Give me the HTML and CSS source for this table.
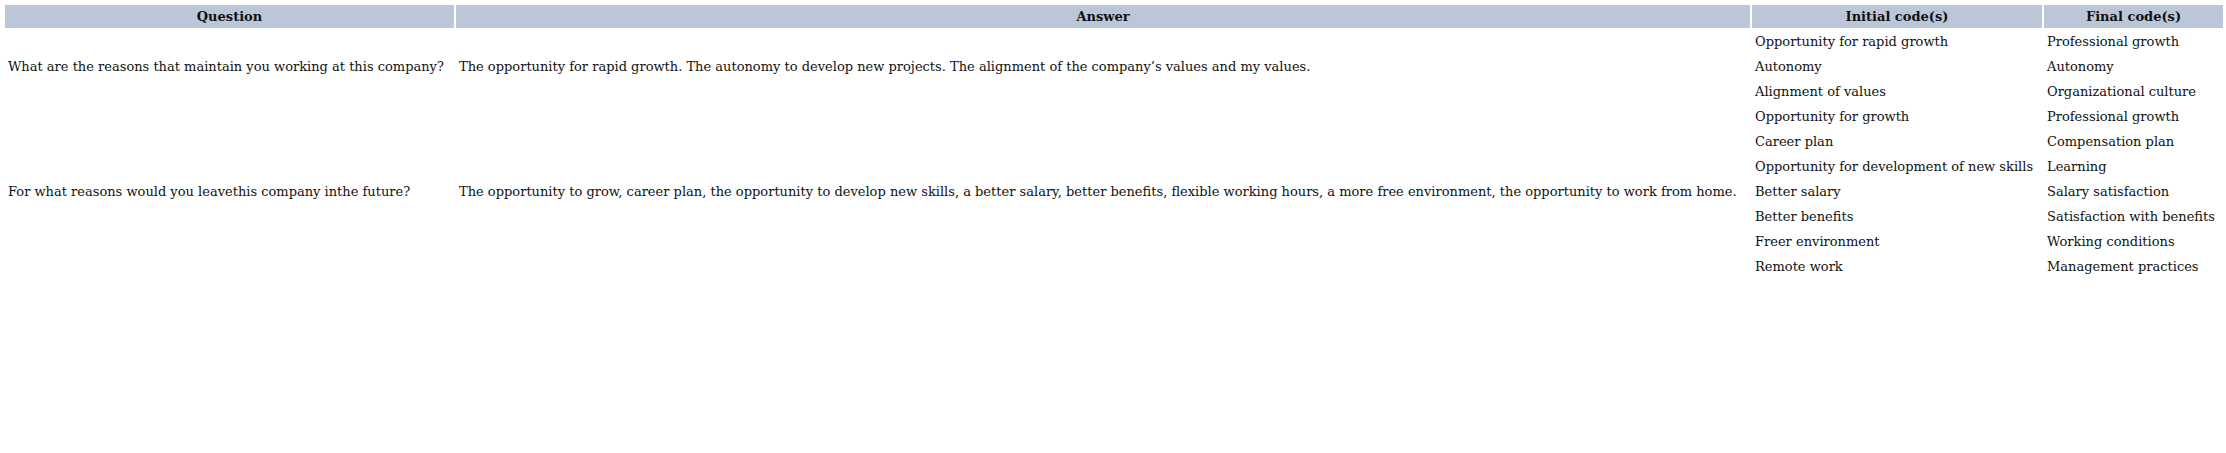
FILE: index.html
```html
<!DOCTYPE html>
<html>
<head>
<meta charset="utf-8">
<link rel="stylesheet" href="styles.css">
</head>
<body>
<table class="codes">
  <colgroup>
    <col class="c-q">
    <col class="c-a">
    <col class="c-i">
    <col class="c-f">
  </colgroup>
  <thead>
    <tr><th>Question</th><th>Answer</th><th>Initial code(s)</th><th>Final code(s)</th></tr>
  </thead>
  <tbody>
    <tr>
      <td rowspan="3">What are the reasons that maintain you working at this company?</td>
      <td rowspan="3">The opportunity for rapid growth. The autonomy to develop new projects. The alignment of the company’s values and my values.</td>
      <td>Opportunity for rapid growth</td><td>Professional growth</td>
    </tr>
    <tr><td>Autonomy</td><td>Autonomy</td></tr>
    <tr><td>Alignment of values</td><td>Organizational culture</td></tr>
    <tr>
      <td rowspan="7">For what reasons would you leavethis company inthe future?</td>
      <td rowspan="7">The opportunity to grow, career plan, the opportunity to develop new skills, a better salary, better benefits, flexible working hours, a more free environment, the opportunity to work from home.</td>
      <td>Opportunity for growth</td><td>Professional growth</td>
    </tr>
    <tr><td>Career plan</td><td>Compensation plan</td></tr>
    <tr><td>Opportunity for development of new skills</td><td>Learning</td></tr>
    <tr><td>Better salary</td><td>Salary satisfaction</td></tr>
    <tr><td>Better benefits</td><td>Satisfaction with benefits</td></tr>
    <tr><td>Freer environment</td><td>Working conditions</td></tr>
    <tr><td>Remote work</td><td>Management practices</td></tr>
  </tbody>
</table>
</body>
</html>
```

FILE: styles.css
```css
html, body {
  background: #ffffff;
}
body {
  margin: 3px;
  font-family: "DejaVu Serif", "Liberation Serif", serif;
  font-size: 13px;
  color: #111111;
}
.codes {
  width: 2220px;
  table-layout: fixed;
  border-collapse: separate;
  border-spacing: 2px;
}
.c-q { width: 449px; }
.c-a { width: 1294px; }
.c-i { width: 290px; }
.c-f { width: 179px; }
.codes th {
  background: #bbc7d8;
  font-weight: bold;
  text-align: center;
  height: 23px;
  padding: 0 3px;
  box-sizing: border-box;
  white-space: nowrap;
}
.codes td {
  height: 23px;
  padding: 0 3px;
  box-sizing: border-box;
  vertical-align: middle;
  white-space: nowrap;
  text-align: left;
}
```
